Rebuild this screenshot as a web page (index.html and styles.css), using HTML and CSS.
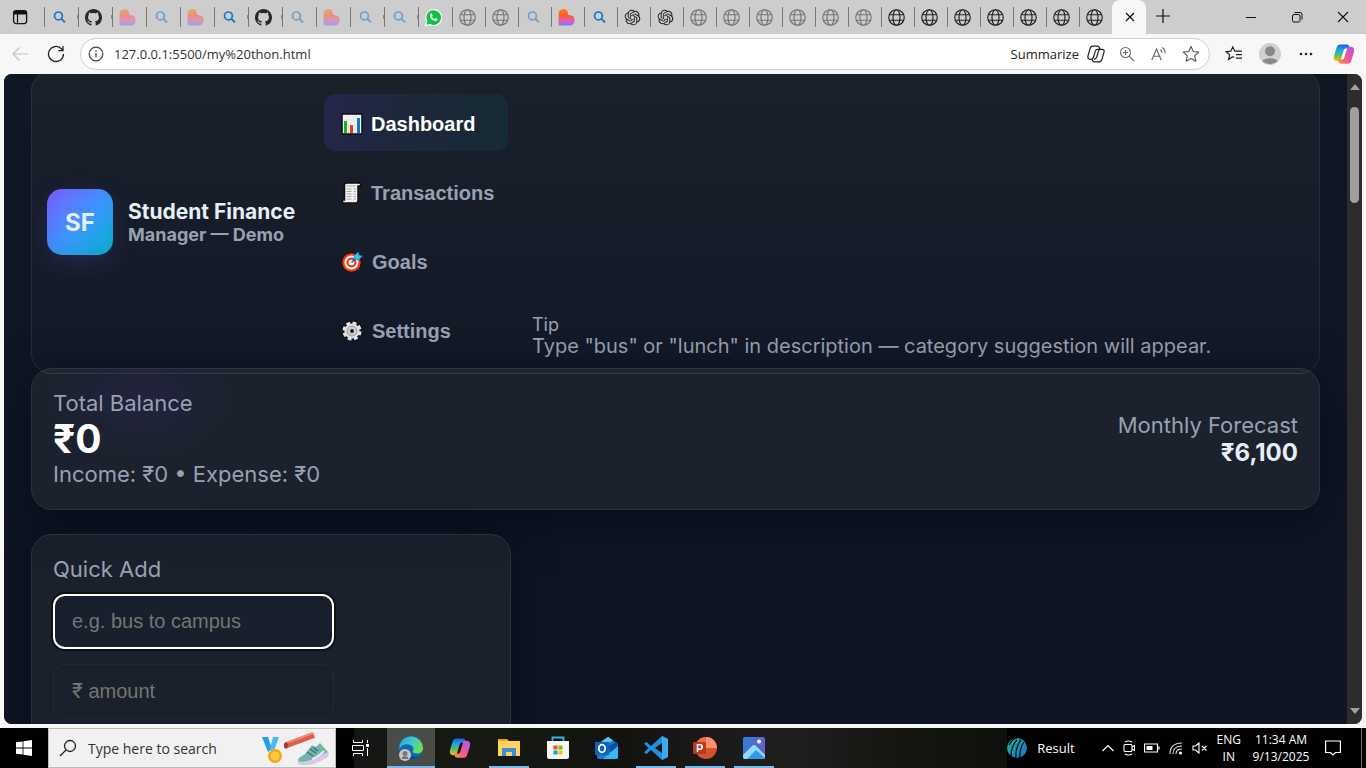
FILE: index.html
```html
<!DOCTYPE html>
<html lang="en">
<head>
<meta charset="utf-8">
<title>Student Finance Manager</title>
<link rel="stylesheet" href="styles.css">
</head>
<body>
<svg class="defs" aria-hidden="true">
  <defs>
    <linearGradient id="g-heart" x1="0.5" y1="0" x2="0.5" y2="1"><stop offset="0" stop-color="#ff7a1a"/><stop offset=".4" stop-color="#fb5a2c"/><stop offset=".68" stop-color="#f25aa8"/><stop offset="1" stop-color="#6f7cff"/></linearGradient>
    <linearGradient id="g-cop1" x1="0" y1="0" x2="0" y2="1"><stop offset="0" stop-color="#1b5fe0"/><stop offset=".35" stop-color="#1fa6e8"/><stop offset=".65" stop-color="#5fbf55"/><stop offset="1" stop-color="#ffc400"/></linearGradient>
    <linearGradient id="g-cop2" x1="1" y1="0" x2="0" y2="1"><stop offset="0" stop-color="#a45cf0"/><stop offset=".5" stop-color="#f0559a"/><stop offset="1" stop-color="#ff8a4a"/></linearGradient>
    <linearGradient id="g-edge" x1="0" y1="0" x2="1" y2=".5"><stop offset="0" stop-color="#2a9fe0"/><stop offset=".6" stop-color="#3fcfc0"/><stop offset="1" stop-color="#6be04e"/></linearGradient>
    <linearGradient id="g-icc" x1="0" y1="0" x2="1" y2="1"><stop offset="0" stop-color="#13b89a"/><stop offset="1" stop-color="#1b6fd0"/></linearGradient>
    <linearGradient id="g-photo" x1="0" y1="0" x2="1" y2="1"><stop offset="0" stop-color="#2f7fe0"/><stop offset="1" stop-color="#7a55b8"/></linearGradient>
  </defs>
  <symbol id="search" viewBox="0 0 16 16"><circle cx="7" cy="6.5" r="3.7" fill="none" stroke="#1a73c8" stroke-width="1.6"/><path d="M9.8 9.3 13.2 12.6" stroke="#1a73c8" stroke-width="1.9"/></symbol>
  <symbol id="github" viewBox="0 0 16 16"><path fill="#24292f" d="M8 0C3.58 0 0 3.58 0 8c0 3.54 2.29 6.53 5.47 7.59.4.07.55-.17.55-.38 0-.19-.01-.82-.01-1.49-2.01.37-2.53-.49-2.69-.94-.09-.23-.48-.94-.82-1.13-.28-.15-.68-.52-.01-.53.63-.01 1.08.58 1.23.82.72 1.21 1.87.87 2.33.66.07-.52.28-.87.51-1.07-1.78-.2-3.64-.89-3.64-3.95 0-.87.31-1.59.82-2.15-.08-.2-.36-1.02.08-2.12 0 0 .67-.21 2.2.82.64-.18 1.32-.27 2-.27s1.36.09 2 .27c1.53-1.04 2.2-.82 2.2-.82.44 1.1.16 1.92.08 2.12.51.56.82 1.27.82 2.15 0 3.07-1.87 3.75-3.65 3.95.29.25.54.73.54 1.48 0 1.07-.01 1.93-.01 2.2 0 .21.15.46.55.38A8.01 8.01 0 0 0 16 8c0-4.42-3.58-8-8-8Z"/></symbol>
  <symbol id="heart" viewBox="0 0 16 16"><path fill="url(#g-heart)" d="M.6 4.7A4.400 4.400 0 0 1 9.300 3.600L9.700 5.600 11.700 5.900A4.850 4.850 0 0 1 11 15.500H1.600Q.6 15.500.6 14.500Z"/></symbol>
  <symbol id="globe" viewBox="0 0 16 16"><g fill="none" stroke="#222" stroke-width="1.1"><circle cx="8" cy="8" r="7.3"/><ellipse cx="8" cy="8" rx="3.3" ry="7.3"/><path d="M1.3 5.4H14.7M1.3 10.6H14.7"/></g></symbol>
  <symbol id="gpt" viewBox="-1 -1 26 26"><path fill="#222" d="M22.2819 9.8211a5.9847 5.9847 0 0 0-.5157-4.9108 6.0462 6.0462 0 0 0-6.5098-2.9A6.0651 6.0651 0 0 0 4.9807 4.1818a5.9847 5.9847 0 0 0-3.9977 2.9 6.0462 6.0462 0 0 0 .7427 7.0966 5.98 5.98 0 0 0 .511 4.9107 6.051 6.051 0 0 0 6.5146 2.9001A5.9847 5.9847 0 0 0 13.2599 24a6.0557 6.0557 0 0 0 5.7718-4.2058 5.9894 5.9894 0 0 0 3.9977-2.9001 6.0557 6.0557 0 0 0-.7475-7.0729zm-9.022 12.6081a4.4755 4.4755 0 0 1-2.8764-1.0408l.1419-.0804 4.7783-2.7582a.7948.7948 0 0 0 .3927-.6813v-6.7369l2.02 1.1686a.071.071 0 0 1 .038.052v5.5826a4.504 4.504 0 0 1-4.4945 4.4944zm-9.6607-4.1254a4.4708 4.4708 0 0 1-.5346-3.0137l.142.0852 4.783 2.7582a.7712.7712 0 0 0 .7806 0l5.8428-3.3685v2.3324a.0804.0804 0 0 1-.0332.0615L9.74 19.9502a4.4992 4.4992 0 0 1-6.1408-1.6464zM2.3408 7.8956a4.485 4.485 0 0 1 2.3655-1.9728V11.6a.7664.7664 0 0 0 .3879.6765l5.8144 3.3543-2.0201 1.1685a.0757.0757 0 0 1-.071 0l-4.8303-2.7865A4.504 4.504 0 0 1 2.3408 7.872zm16.5963 3.8558L13.1038 8.364 15.1192 7.2a.0757.0757 0 0 1 .071 0l4.8303 2.7913a4.4944 4.4944 0 0 1-.6765 8.1042v-5.6772a.79.79 0 0 0-.407-.667zm2.0107-3.0231l-.142-.0852-4.7735-2.7818a.7759.7759 0 0 0-.7854 0L9.409 9.2297V6.8974a.0662.0662 0 0 1 .0284-.0615l4.8303-2.7866a4.4992 4.4992 0 0 1 6.6802 4.66zM8.3065 12.863l-2.02-1.1638a.0804.0804 0 0 1-.038-.0567V6.0742a4.4992 4.4992 0 0 1 7.3757-3.4537l-.142.0805L8.704 5.459a.7948.7948 0 0 0-.3927.6813zm1.0976-2.3654l2.602-1.4998 2.6069 1.4998v2.9994l-2.5974 1.4997-2.6067-1.4997Z"/></symbol>
  <symbol id="whatsapp" viewBox="0 0 16 16"><path d="M.6 15.6 1.7 11.6A7.4 7.4 0 1 1 4.8 14.6Z" fill="#12c143" stroke="#fff" stroke-width="1"/><path d="M5.4 4.2c.5-.4 1-.2 1.2.4l.5 1.2c.1.5-.6.8-.6 1.2.5 1 1.4 1.8 2.4 2.3.5 0 .8-.9 1.3-.8l1.4.8c.4.3.1 1.1-.4 1.5-1.3 1-3.3.2-4.8-1.2S3.8 5.800 5.400 4.200Z" fill="#fff"/></symbol>
  <symbol id="copilot" viewBox="0 0 24 24"><path fill="url(#g-cop1)" d="M8 1.500H15c2 0 2.500 1.200 3 3l.4 1.500H14c-1.500 0-2 .8-2.400 2.200L9 17c-.6 2-1.300 2.800-3 2.800H4.500c-3 0-4.200-2.500-3.400-5.500L4 5c.7-2.300 1.900-3.500 4-3.500Z"/><path fill="url(#g-cop2)" d="M16 22.500H9c-2 0-2.500-1.200-3-3l-.4-1.500H10c1.500 0 2-.8 2.400-2.200L15 7c.6-2 1.300-2.800 3-2.800h1.500c3 0 4.200 2.500 3.400 5.500L20 19c-.7 2.300-1.900 3.500-4 3.500Z"/></symbol>
  <symbol id="copilot-line" viewBox="0 0 16 16"><g fill="none" stroke="#222" stroke-width="1.1"><path d="M5.200 1h4.300c1.400 0 1.700 1.600 2 2.800H9.200c-1 0-1.500.5-1.800 1.600L5.700 11c-.4 1.200-.9 1.700-2 1.700H2.800C1 12.700.5 11.100.9 9.600l1.700-6C3 1.900 3.800 1 5.200 1Z"/><path d="M10.800 15H6.500c-1.400 0-1.700-1.100-2-2.300M10.800 15c1.400 0 2.200-.9 2.600-2.600l1.700-6c.4-1.500-.1-2.600-1.900-2.600h-1.700M6.200 12.700c1.400 0 1.900-.5 2.300-1.700l1.700-5.600c.3-1.100.9-1.600 1.900-1.600"/></g></symbol>
</svg>

<header class="titlebar">
  <button class="tab-menu" aria-label="Tab actions"><svg width="16" height="16" viewBox="0 0 16 16"><rect x="1.600" y="1.600" width="13" height="13" rx="2.500" fill="none" stroke="#111" stroke-width="1.300"/><path d="M1.500 2h13v3.500h-13Z" fill="#111"/><path d="M5.500 5v9.500" stroke="#111" stroke-width="1.200"/></svg></button>
  <nav class="tabs" aria-label="Open tabs">
    <button class="tab titled"><svg><use href="#search"/></svg></button>
    <button class="tab titled"><svg><use href="#github"/></svg></button>
    <button class="tab asleep"><svg><use href="#heart"/></svg></button>
    <button class="tab asleep"><svg><use href="#search"/></svg></button>
    <button class="tab asleep"><svg><use href="#heart"/></svg></button>
    <button class="tab titled"><svg><use href="#search"/></svg></button>
    <button class="tab titled"><svg><use href="#github"/></svg></button>
    <button class="tab asleep"><svg><use href="#search"/></svg></button>
    <button class="tab asleep"><svg><use href="#heart"/></svg></button>
    <button class="tab asleep titled"><svg><use href="#search"/></svg></button>
    <button class="tab asleep titled"><svg><use href="#search"/></svg></button>
    <button class="tab"><svg><use href="#whatsapp"/></svg></button>
    <button class="tab narrow asleep"><svg><use href="#globe"/></svg></button>
    <button class="tab narrow asleep"><svg><use href="#globe"/></svg></button>
    <button class="tab narrow asleep"><svg><use href="#search"/></svg></button>
    <button class="tab narrow"><svg><use href="#heart"/></svg></button>
    <button class="tab narrow"><svg><use href="#search"/></svg></button>
    <button class="tab narrow"><svg><use href="#gpt"/></svg></button>
    <button class="tab narrow"><svg><use href="#gpt"/></svg></button>
    <button class="tab narrow asleep"><svg><use href="#globe"/></svg></button>
    <button class="tab narrow asleep"><svg><use href="#globe"/></svg></button>
    <button class="tab narrow asleep"><svg><use href="#globe"/></svg></button>
    <button class="tab narrow asleep"><svg><use href="#globe"/></svg></button>
    <button class="tab narrow asleep"><svg><use href="#globe"/></svg></button>
    <button class="tab narrow asleep"><svg><use href="#globe"/></svg></button>
    <button class="tab narrow"><svg><use href="#globe"/></svg></button>
    <button class="tab narrow"><svg><use href="#globe"/></svg></button>
    <button class="tab narrow"><svg><use href="#globe"/></svg></button>
    <button class="tab narrow"><svg><use href="#globe"/></svg></button>
    <button class="tab narrow"><svg><use href="#globe"/></svg></button>
    <button class="tab narrow"><svg><use href="#globe"/></svg></button>
    <button class="tab narrow"><svg><use href="#globe"/></svg></button>
    <button class="tab-active" aria-label="Close tab"><svg width="10" height="10" viewBox="0 0 10 10"><path d="M1 1 9 9M9 1 1 9" stroke="#111" stroke-width="1.200"/></svg></button>
  </nav>
  <button class="new-tab" aria-label="New tab"><svg width="14" height="14" viewBox="0 0 14 14"><path d="M7 0V14M0 7H14" stroke="#111" stroke-width="1.200"/></svg></button>
  <div class="window-controls">
    <button aria-label="Minimize"><svg width="12" height="12" viewBox="0 0 12 12"><path d="M1 6.500H11" stroke="#111"/></svg></button>
    <button aria-label="Restore"><svg width="12" height="12" viewBox="0 0 12 12"><g fill="none" stroke="#111"><rect x="1.500" y="3.500" width="7.500" height="7.500" rx="1.500"/><path d="M3.500 1.500H9a2 2 0 0 1 2 2V8.500"/></g></svg></button>
    <button aria-label="Close"><svg width="12" height="12" viewBox="0 0 12 12"><path d="M1 1 11 11M11 1 1 11" stroke="#111" stroke-width="1.100"/></svg></button>
  </div>
</header>

<div class="toolbar">
  <button class="tool" aria-label="Back"><svg width="18" height="16" viewBox="0 0 18 16"><path d="M17 8H2M8.500 1.500 2 8l6.500 6.500" fill="none" stroke="#c0c0c0" stroke-width="1.200"/></svg></button>
  <button class="tool" aria-label="Refresh"><svg width="18" height="18" viewBox="0 0 18 18"><path d="M16.500 9A7.500 7.500 0 1 1 14 3.400L16 5.300M16 1v4.700h-4.700" fill="none" stroke="#222" stroke-width="1.300"/></svg></button>
  <div class="address">
    <svg class="info" width="16" height="16" viewBox="0 0 16 16"><circle cx="8" cy="8" r="6.800" fill="none" stroke="#444" stroke-width="1.200"/><path d="M8 7v4.500M8 4.300v1.500" stroke="#444" stroke-width="1.300"/></svg>
    <input class="url" aria-label="Address" value="127.0.0.1:5500/my%20thon.html">
    <button class="summarize">Summarize <svg width="18" height="18"><use href="#copilot-line"/></svg></button>
    <button class="tool small" aria-label="Zoom"><svg width="16" height="16" viewBox="0 0 16 16"><g fill="none" stroke="#666" stroke-width="1.100"><circle cx="6.500" cy="6.500" r="5"/><path d="M10.200 10.200 15 15M6.500 4v5M4 6.500h5"/></g></svg></button>
    <button class="tool small" aria-label="Read aloud"><svg width="16" height="16" viewBox="0 0 16 16"><g fill="none" stroke="#666" stroke-width="1.100"><path d="M.8 14 5.500 3 10.200 14M2.400 10.300H8.600M9.300 3.700c1.200.8 1.700 1.900 1.600 3.200M11 1.500c2.300 1.500 3.300 3.600 3 6"/></g></svg></button>
    <button class="tool small" aria-label="Favorite"><svg width="18" height="18" viewBox="0 0 18 18"><path d="M9 1.400 11.300 6.500 16.800 7.100 12.700 10.800 13.900 16.300 9 13.500 4.100 16.300 5.300 10.800 1.200 7.100 6.700 6.500Z" fill="none" stroke="#555" stroke-width="1.100" stroke-linejoin="round"/></svg></button>
  </div>
  <div class="browser-actions">
    <button class="tool" aria-label="Favorites"><svg width="18" height="18" viewBox="0 0 18 18"><path d="M9 12.500 7.500 11.800 3.600 14.500 4.600 9.900 1.200 6.800 5.800 6.200 7.800 2 9.800 6.200H17M11 9.700h6M11 13.200h6" fill="none" stroke="#222" stroke-width="1.200"/></svg></button>
    <button class="tool" aria-label="Profile"><svg width="22" height="22" viewBox="0 0 22 22"><circle cx="11" cy="11" r="11" fill="#d2d0ce"/><circle cx="11" cy="8.300" r="5" fill="#8a8886"/><path d="M3.500 18.200c1.500-4 13.500-4 15 0A11 11 0 0 1 3.500 18.200Z" fill="#8a8886"/></svg></button>
    <button class="tool" aria-label="More"><svg width="14" height="4" viewBox="0 0 14 4"><circle cx="2" cy="2" r="1.300" fill="#222"/><circle cx="7" cy="2" r="1.300" fill="#222"/><circle cx="12" cy="2" r="1.300" fill="#222"/></svg></button>
    <button class="tool large" aria-label="Copilot"><svg width="24" height="22"><use href="#copilot"/></svg></button>
  </div>
</div>

<div class="viewport">
  <div class="page">
    <aside class="card sidebar">
      <div class="brand">
        <div class="logo">SF</div>
        <div class="brand-text"><div class="brand-name">Student Finance</div><div class="brand-sub">Manager — Demo</div></div>
      </div>
      <nav class="menu">
        <button class="menu-item active"><svg width="22" height="22" viewBox="0 0 22 22"><rect x="1" y="1" width="20" height="20" rx="1" fill="#f3f3f3" stroke="#0b0d12" stroke-width="1.500"/><path d="M7.500 2v18M14 2v18M2 7h18M2 13h18" stroke="#ddd" stroke-width=".6"/><path d="M3 8h3v12H3Z" fill="#16b51a"/><path d="M9 12h3v8H9Z" fill="#f03a17"/><path d="M16 5h3v15h-3Z" fill="#0b78d8"/></svg>Dashboard</button>
        <button class="menu-item"><svg width="22" height="22" viewBox="0 0 22 22"><path d="M3.500 3q0-2 2-2H18q2 0 1.500 3h-2.500V19q0 2-2.500 2H3q-2 0-1.500-3h2Z" fill="#f3f3f3" stroke="#0b0d12" stroke-width="1.500"/><path d="M5.500 4h9M5.500 7h5M5.500 9.500h5M5.500 12h5M5.500 14.500h5M5.500 17h5M12.500 7h2.500M12.500 9.500h2.500M12.500 12h2.500M12.500 14.500h2.500M12.500 17h2.500" stroke="#aaa" stroke-width="1.100"/></svg>Transactions</button>
        <button class="menu-item wide"><svg width="22" height="22" viewBox="0 0 22 22"><circle cx="10.500" cy="11.500" r="9.800" fill="#f03a17" stroke="#0b0d12"/><circle cx="10.500" cy="11.500" r="7" fill="#fff"/><circle cx="10.500" cy="11.500" r="5" fill="#f03a17"/><circle cx="10.500" cy="11.500" r="2.800" fill="#fff"/><path d="M10.500 11.500 16 6" stroke="#0b67b8" stroke-width="1.600"/><path d="M13 8.500V5L17 1l1 3 3.500 1-4 4Z" fill="#2ec4f0" stroke="#0d6fae" stroke-width=".6"/></svg>Goals</button>
        <button class="menu-item wide"><svg width="22" height="22" viewBox="0 0 22 22"><circle cx="11" cy="11" r="8.400" fill="none" stroke="#0b0d12" stroke-width="4.400" stroke-dasharray="4.800 1.797"/><circle cx="11" cy="11" r="8.300" fill="none" stroke="#e6e6e6" stroke-width="2.600" stroke-dasharray="4 2.519" stroke-dashoffset="-.4"/><circle cx="11" cy="11" r="7.600" fill="#e6e6e6"/><circle cx="11" cy="11" r="5" fill="#ccc" stroke="#999"/><circle cx="11" cy="11" r="2.200" fill="#111" stroke="#fff" stroke-width=".5"/></svg>Settings</button>
      </nav>
      <div class="tip"><div class="tip-title">Tip</div><div class="tip-text">Type "bus" or "lunch" in description — category suggestion will appear.</div></div>
    </aside>

    <main class="content">
      <section class="card balance">
        <div><div class="label">Total Balance</div><div class="amount">₹0</div><div class="label">Income: ₹0 • Expense: ₹0</div></div>
        <div class="forecast"><div class="label">Monthly Forecast</div><div class="forecast-value">₹6,100</div></div>
      </section>
      <section class="card quick-add">
        <h2 class="label">Quick Add</h2>
        <form class="quick-form">
          <input class="field current" aria-label="Description" placeholder="e.g. bus to campus">
          <input class="field" aria-label="Amount" placeholder="₹ amount">
        </form>
      </section>
    </main>
  </div>
  <div class="scrollbar" aria-hidden="true">
    <svg width="10" height="6" viewBox="0 0 10 6"><path d="M0 6 5 0 10 6Z" fill="#a0a0a0"/></svg>
    <div class="track"><div class="thumb"></div></div>
    <svg width="10" height="6" viewBox="0 0 10 6"><path d="M0 0H10L5 6Z" fill="#a0a0a0"/></svg>
  </div>
</div>

<footer class="taskbar">
  <button class="start" aria-label="Start"><svg width="16" height="16" viewBox="0 0 16 16"><path fill="#fff" d="M0 2.300 6.600 1.400V7.600H0ZM7.400 1.300 16 0V7.600H7.400ZM0 8.400H6.600V14.600L0 13.700ZM7.400 8.400H16V16L7.400 14.700Z"/></svg></button>
  <label class="search-box">
    <svg width="18" height="18" viewBox="0 0 18 18"><g fill="none" stroke="#222" stroke-width="1.300"><circle cx="11" cy="7" r="5.500"/><path d="M7 11 1 17"/></g></svg>
    <input aria-label="Search" placeholder="Type here to search">
    <svg class="sport" width="70" height="36" viewBox="0 0 70 36"><path d="M1 7h6l4 12-4 3Z" fill="#1f9fe8"/><path d="M12 7h6l-5 14-4-2Z" fill="#46bdf4"/><circle cx="14" cy="26" r="7" fill="#f7a51a"/><circle cx="14" cy="26" r="4.500" fill="#ffc93c"/><path d="M26 15 53 5" stroke="#e25c4e" stroke-width="6"/><path d="M25 13 52 3" stroke="#f58a78" stroke-width="2"/><ellipse cx="25" cy="15.500" rx="2" ry="3.300" fill="#a83a34"/><path d="M37 31c0-4 3-4 7-7l7-9c3 3 5 2 8-2l8 9c1 3 0 5-3 6L49 34H40Z" fill="#73b5aa"/><path d="M37 31c8 3 19-4 30-9 1 4-1 6-5 8-8 4-14 6-22 5-3 0-4-2-3-4Z" fill="#d8c9e8"/><path d="M46 22l6 4M49 19l6 4M52 17l5 4" stroke="#3a6d7c" stroke-width="1.300"/><path d="M51 29c5-1 8-4 12-8" stroke="#e2f3f0" stroke-width="2" fill="none"/></svg>
  </label>
  <div class="apps">
    <button class="app view" aria-label="Task view"><svg width="18" height="16" viewBox="0 0 18 16"><g fill="none" stroke="#fff"><path d="M1.500 0v2.500h9V0M1.500 16v-2.500h9V16M.500 5.500h11v5H.500Z"/><path d="M15.500 0v3M15.500 8v8"/></g><path d="M14 4h3v3h-3Z" fill="#fff"/></svg></button>
    <button class="app current" aria-label="Edge"><svg width="26" height="26" viewBox="0 0 26 26"><circle cx="13" cy="13" r="12" fill="#1467b0"/><path d="M1.500 10A12 12 0 0 1 25 13c0 4-3 5.500-6 5.500s-5-1-4-3c1-1.400.8-5-4-6C7 8.700 3 10 1.500 14Z" fill="url(#g-edge)"/><path d="M9 13c-1 6 4 10 13 8-5 5-13 5-17 0-3-4 0-8 4-8Z" fill="#0f4f91"/><circle cx="7" cy="20" r="6" fill="#c9c7c5"/><circle cx="7" cy="18.500" r="2.500" fill="#777"/><path d="M3.500 24c0-4 7-4 7 0Z" fill="#777"/></svg></button>
    <button class="app" aria-label="Copilot"><svg width="24" height="22"><use href="#copilot"/></svg></button>
    <button class="app open" aria-label="File Explorer"><svg width="22" height="20" viewBox="0 0 22 20"><path d="M0 1h9l2 2H0Z" fill="#e8a40c"/><path d="M0 3h22v15H0Z" fill="#ffd35c"/><path d="M4 18V10h14v8h-4v-4H8v4Z" fill="#3d8ed8"/></svg></button>
    <button class="app" aria-label="Store"><svg width="24" height="24" viewBox="0 0 24 24"><path d="M6.500 6V1.500h11V6" fill="none" stroke="#32b4e8" stroke-width="1.800"/><path d="M1 5h22v16q0 2-2 2H3q-2 0-2-2Z" fill="#f5f5f5"/><path d="M7.500 9.500h4v4h-4Z" fill="#f25022"/><path d="M12.500 9.500h4v4h-4Z" fill="#7fba00"/><path d="M7.500 14.500h4v4h-4Z" fill="#00a4ef"/><path d="M12.500 14.500h4v4h-4Z" fill="#ffb900"/></svg></button>
    <button class="app" aria-label="Outlook"><svg width="26" height="24" viewBox="0 0 26 24"><path d="M3 8 14 1l10 7v13q0 2-2 2H5q-2 0-2-2Z" fill="#1a78cf"/><path d="M8 5 14 1l5 3.200L12 9Z" fill="#5fc3f5"/><path d="M15 10 22 6l2 2v3l-8 5Z" fill="#12509c"/><path d="M24 10v11q0 2-2 2H9Z" fill="#35b8f1"/><path d="M1 6h14v13H1Z" fill="#0f62bd"/><ellipse cx="8" cy="12.500" rx="3.200" ry="3.800" fill="none" stroke="#fff" stroke-width="1.800"/></svg></button>
    <button class="app open" aria-label="Visual Studio Code"><svg width="24" height="24" viewBox="0 0 24 24"><path d="M18 0 24 3V21L18 24 7 14 2.500 18 0 16.500 4.500 12 0 7.500 2.500 6 7 10ZM18 7l-7 5 7 5Z" fill="#1f8fe0" fill-rule="evenodd"/><path d="M18 0 24 3V21L18 24Z" fill="#39a9f0"/></svg></button>
    <button class="app open" aria-label="PowerPoint"><svg width="24" height="22" viewBox="0 0 24 22"><circle cx="13" cy="11" r="11" fill="#d35230"/><path d="M13 0a11 11 0 0 1 11 11H13Z" fill="#ff8f6b"/><path d="M13 0v11H2A11 11 0 0 1 13 0Z" fill="#ed6c47"/><rect x="0" y="5" width="13" height="12" rx="1" fill="#b83b1d"/><path d="M4.500 15V7.800H7a2.200 2.200 0 0 1 0 4.400H4.500" fill="none" stroke="#fff" stroke-width="1.600"/></svg></button>
    <button class="app open" aria-label="Photos"><svg width="22" height="22" viewBox="0 0 22 22"><rect width="22" height="22" rx="2" fill="url(#g-photo)"/><path d="M0 18 9 9q2-2 4 0l9 9v2q0 2-2 2H2q-2 0-2-2Z" fill="#8bdcff"/><path d="M4 22 13 13l9 8-2 1Z" fill="#2c9be8"/><circle cx="16" cy="4.500" r="2" fill="#fff"/></svg></button>
  </div>
  <div class="tray">
    <button class="result"><svg width="20" height="22" viewBox="0 0 20 22"><circle cx="10" cy="11" r="10" fill="url(#g-icc)"/><path d="M2 8Q6 1 10 1M4 20Q4 9 10 3M9 22Q8 10 14 3M13 22Q12 12 17 5" fill="none" stroke="#02080c" stroke-width="1.200"/></svg>Result</button>
    <svg width="12" height="12" viewBox="0 0 12 12"><path d="M.5 9 6 3.500 11.500 9" fill="none" stroke="#fff" stroke-width="1.200"/></svg>
    <svg width="12" height="16" viewBox="0 0 12 16"><g fill="none" stroke="#fff" stroke-width="1.100"><rect x="1" y="4.500" width="8" height="7" rx="1"/><path d="M9 7 11.500 5.500v5L9 9M2 2q3.500-2 7 0M2 14q3.500 2 7 0"/></g></svg>
    <svg width="16" height="10" viewBox="0 0 16 10"><path d="M.5 1h13v8H.5ZM15 3.500v3" fill="none" stroke="#fff" stroke-width="1.200"/><path d="M2.500 3h6v4h-6Z" fill="#fff"/></svg>
    <svg width="14" height="14" viewBox="0 0 14 14"><g fill="none" stroke="#ddd" stroke-width="1.100"><path d="M1 13Q1 2 13 2M4 13Q4 5 13 5M7 13Q7 8 13 8"/></g><circle cx="11.500" cy="12" r="1.500" fill="#fff"/></svg>
    <svg width="16" height="12" viewBox="0 0 16 12"><path d="M1 4h2.500L7 1v10L3.500 8H1ZM10 4l4.500 4.500M14.500 4 10 8.500" fill="none" stroke="#fff" stroke-width="1.100"/></svg>
    <div class="tray-text lang">ENG<br>IN</div>
    <div class="tray-text clock">11:34 AM<br>9/13/2025</div>
    <button class="notify" aria-label="Notifications"><svg width="16" height="16" viewBox="0 0 16 16"><path d="M.600 1H15.400V12.500H10.500L8 15 5.500 12.500H.600Z" fill="none" stroke="#fff" stroke-width="1.200"/></svg></button>
  </div>
</footer>
</body>
</html>
```
FILE: styles.css
```css
* { box-sizing: border-box; }
body {
  margin: 0;
  height: 100vh;
  display: flex;
  flex-direction: column;
  overflow: hidden;
  background: #f7f7f7;
  font-family: "Open Sans", "Noto Sans", sans-serif;
}
button { border: 0; padding: 0; margin: 0; background: none; font: inherit; color: inherit; }
svg { display: block; flex: none; }
.defs { position: absolute; width: 0; height: 0; }

/* Browser title bar */
.titlebar { flex: none; height: 34px; display: flex; background: #cdcdcd; }
.tab-menu { width: 44px; padding-right: 4px; display: grid; place-items: center; }
.tabs { display: flex; }
.tab {
  width: 34px;
  height: 20px;
  margin-top: 7px;
  padding-left: 6px;
  display: flex;
  align-items: center;
  border-left: 1px solid #777;
}
.tab.narrow { width: 33px; }
.tab svg { width: 17px; height: 17px; }
.tab.asleep svg { opacity: .5; }
.tab.titled::after { content: ""; width: 1px; height: 4px; margin-left: auto; background: #888; }
.tab-active {
  width: 34px;
  padding-left: 2px;
  display: grid;
  place-items: center;
  background: #f7f7f7;
  border-radius: 8px 8px 0 0;
}
.new-tab { width: 34px; display: grid; place-items: center; padding-bottom: 3px; }
.window-controls { margin-left: auto; display: flex; }
.window-controls button { width: 46px; display: grid; place-items: center; }

/* Browser toolbar */
.toolbar { flex: none; height: 40px; display: flex; align-items: center; padding: 0 2px; }
.tool { width: 36px; height: 32px; display: grid; place-items: center; }
.tool.small { width: 32px; }
.tool.large { width: 40px; }
.address {
  flex: 1;
  height: 32px;
  margin-left: 6px;
  padding: 0 2px 0 7px;
  display: flex;
  align-items: center;
  border: 1px solid #d0d0d0;
  border-radius: 16px;
  background: #fff;
}
.url { flex: 1; min-width: 0; border: 0; outline: 0; padding: 0 0 0 10px; background: none; font: 13px "Open Sans", sans-serif; color: #333; }
.summarize { display: flex; align-items: center; gap: 8px; margin-right: 6px; font-size: 13px; color: #222; }
.browser-actions { display: flex; padding-left: 6px; }

/* Web page area */
.viewport {
  flex: 1;
  min-height: 0;
  margin: 0 4px 4px;
  display: flex;
  overflow: hidden;
  border-radius: 8px;
  background: #0f1724;
}
.page {
  flex: 1;
  min-width: 0;
  padding: 0 27px;
  overflow: hidden;
  font-family: Inter, sans-serif;
  color: #e6eef8;
  background: linear-gradient(180deg, #0f1724, #0f1522);
}
.card {
  border: 1px solid rgba(255, 255, 255, .08);
  border-radius: 21px;
}
.sidebar {
  display: flex;
  align-items: center;
  gap: 24px;
  margin-top: -4px;
  padding: 15px;
  background: linear-gradient(180deg, #1a212b, #121827);
}
.brand { display: flex; align-items: center; gap: 15px; font-weight: 700; }
.brand-text { min-width: 172px; }
.logo {
  width: 66px;
  height: 66px;
  display: grid;
  place-items: center;
  border-radius: 15px;
  font-size: 24px;
  background: linear-gradient(135deg, #7c5cff, #3d94ff 50%, #06b6d4);
  box-shadow: 0 9px 27px rgba(124, 92, 255, .16), inset 0 -6px 18px rgba(0, 0, 0, .06);
}
.brand-name { font-size: 21px; line-height: 25px; }
.brand-sub { font-size: 18px; line-height: 21px; color: #98a1b2; }
.menu { display: flex; flex-direction: column; gap: 12px; margin-top: 8px; }
.menu-item {
  width: 184px;
  height: 57px;
  padding: 3px 0 0 17px;
  display: flex;
  align-items: center;
  gap: 8px;
  border-radius: 12px;
  font: 700 20px "Liberation Sans", sans-serif;
  color: #98a1b2;
}
.menu-item.wide { gap: 9px; }
.menu-item.active { color: #fff; background: linear-gradient(90deg, #25264a, #1c2839 50%, #162a35); }
.tip { align-self: flex-end; color: #98a1b2; }
.tip-title { font-size: 18px; line-height: 21px; }
.tip-text { font-size: 20px; line-height: 23px; }
.content { display: flex; flex-direction: column; gap: 24px; margin-top: -6px; }
.content .card { padding: 21px; box-shadow: 0 12px 45px rgba(2, 6, 23, .6); }
.balance {
  display: flex;
  justify-content: space-between;
  align-items: center;
  background: radial-gradient(90px 60px at 108px 32px, rgba(50, 38, 100, .35), transparent), rgba(255, 250, 235, .05);
}
.label { margin: 0; font-size: 22px; line-height: 27px; font-weight: 400; color: #98a1b2; }
.amount { font-size: 39px; line-height: 44px; font-weight: 700; color: #fff; }
.forecast { text-align: right; }
.forecast-value { font-size: 24px; line-height: 27px; font-weight: 700; }
.quick-add { width: 480px; background: linear-gradient(180deg, #171e2a, #1b212c 60px); }
.quick-form { display: flex; flex-direction: column; align-items: flex-start; gap: 15px; margin-top: 11px; }
.field {
  width: 281px;
  height: 55px;
  padding: 0 18px;
  border: 1px solid rgba(255, 255, 255, .04);
  border-radius: 12px;
  outline: 0;
  background: transparent;
  font: 20px "Liberation Sans", Inter, sans-serif;
  color: #e6eef8;
}
.field::placeholder { color: #757575; opacity: 1; }
.field.current { background: #18202d; outline: 2px solid #fff; outline-offset: -2px; box-shadow: 0 0 0 2px #101010; }
.scrollbar {
  width: 15px;
  display: flex;
  flex-direction: column;
  align-items: center;
  padding: 10px 0;
  background: #2c2c2c;
}
.track { flex: 1; padding-top: 17px; }
.thumb { width: 9px; height: 96px; border-radius: 5px; background: #9f9f9f; }

/* Desktop taskbar */
.taskbar { flex: none; height: 40px; display: flex; background: #000; color: #fff; }
.start { width: 48px; display: grid; place-items: center; }
.search-box {
  width: 288px;
  display: flex;
  align-items: center;
  gap: 11px;
  padding: 0 4px 0 10px;
  border: 1px solid #bbb;
  background: #f1f1f1;
}
.search-box input { flex: 1; min-width: 0; border: 0; outline: 0; padding: 0; background: none; font: 14px "Open Sans", sans-serif; }
.search-box input::placeholder { color: #333; opacity: 1; }
.apps {
  flex: 1;
  display: flex;
  background: linear-gradient(90deg, #000 18px, #141711 18px, #171a13 150px, #12130f 280px, #1f1f1e 450px, #151612 560px, #0e110b);
}
.app { width: 49px; padding-right: 1px; display: grid; place-items: center; }
.app.view { width: 51px; }
.app.open { background: linear-gradient(#76b9ed, #76b9ed) 4px 100% / 40px 2px no-repeat; }
.app.current { padding-right: 1px; background: linear-gradient(#76b9ed, #76b9ed) 0 100% / 48px 2px no-repeat, linear-gradient(#4a4d47, #4a4d47) 0 0 / 48px 100% no-repeat; }
.tray { display: flex; align-items: center; gap: 9px; }
.result { display: flex; align-items: center; gap: 10px; height: 100%; padding: 0 18px 0 0; font-size: 13px; }
.tray-text { font-size: 12px; line-height: 17px; text-align: center; }
.clock { min-width: 62px; }
.notify { width: 41px; height: 100%; margin-right: 4px; padding-left: 4px; display: grid; place-items: center start; border-right: 1px solid #666; }
```
